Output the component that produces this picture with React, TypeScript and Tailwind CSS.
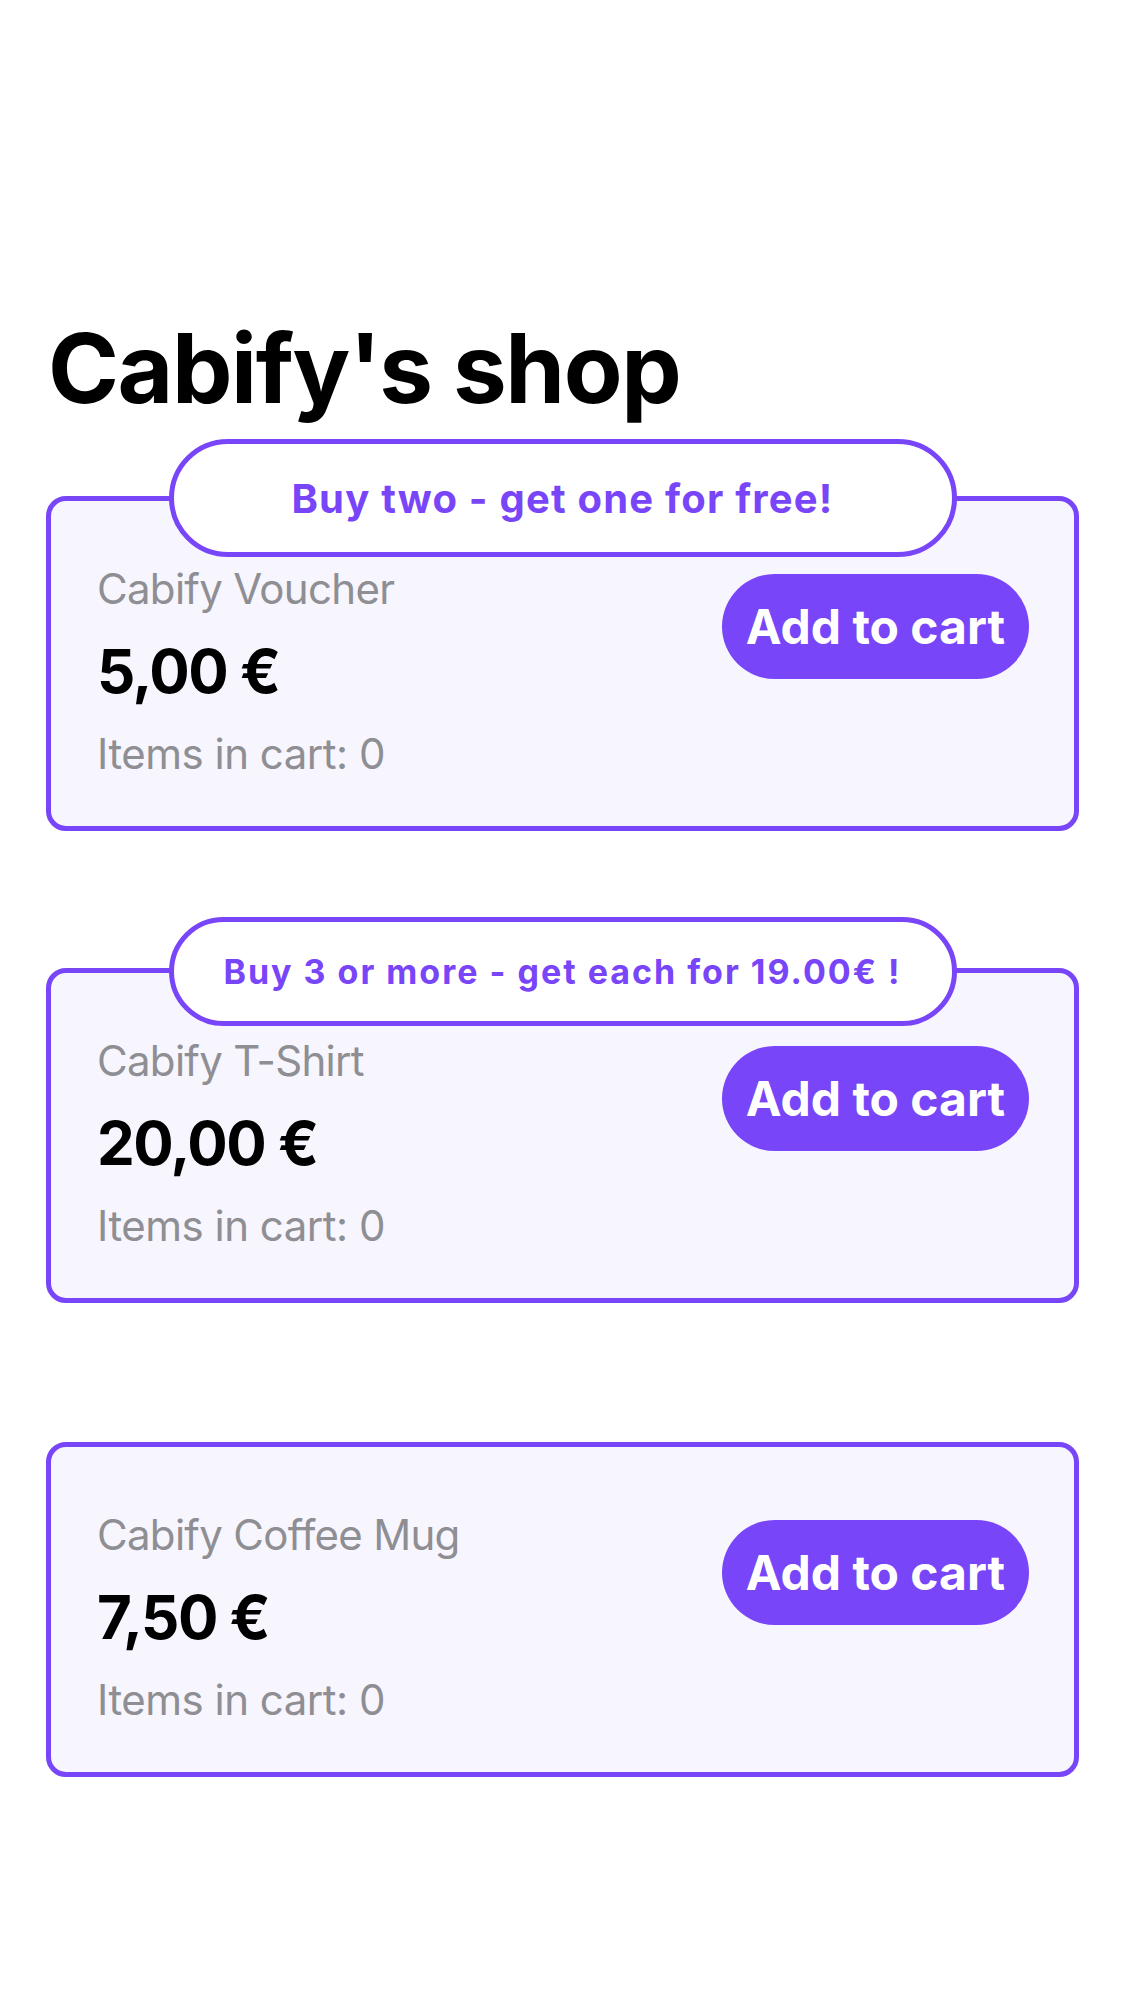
import React from "react";

type Product = {
  name: string;
  price: string;
  badge?: { text: string; size: "lg" | "sm" };
};

const products: Product[] = [
  { name: "Cabify Voucher", price: "5,00 €", badge: { text: "Buy two - get one for free!", size: "lg" } },
  { name: "Cabify T-Shirt", price: "20,00 €", badge: { text: "Buy 3 or more - get each for 19.00€ !", size: "sm" } },
  { name: "Cabify Coffee Mug", price: "7,50 €" },
];

function Badge({ text, size }: { text: string; size: "lg" | "sm" }) {
  if (size === "lg") {
    return (
      <div className="absolute left-1/2 top-[-62px] flex h-[118px] w-[788px] -translate-x-1/2 items-center justify-center rounded-full border-[5px] border-[#7845f8] bg-white text-[40px] font-bold leading-[47px] tracking-[1.2px] text-[#7845f8]">
        {text}
      </div>
    );
  }
  return (
    <div className="absolute left-1/2 top-[-56px] flex h-[109px] w-[788px] -translate-x-1/2 items-center justify-center rounded-full border-[5px] border-[#7845f8] bg-white text-[34px] font-bold leading-[40px] tracking-[2px] text-[#7845f8]">
      {text}
    </div>
  );
}

function Card({ p, className }: { p: Product; className?: string }) {
  return (
    <div
      className={
        "relative flex items-start justify-between rounded-[20px] border-[5px] border-[#7845f8] bg-[#f7f5fe] pb-[47px] pl-[46px] pr-[45px] pt-[62px] " +
        (className ?? "")
      }
    >
      {p.badge && <Badge text={p.badge.text} size={p.badge.size} />}
      <div className="flex flex-col">
        <div className="text-[42px] leading-[51px] tracking-[-0.7px] text-[#8e8e93]">{p.name}</div>
        <div className="mt-[21px] text-[60px] font-bold leading-[73px] tracking-[-1.5px] text-black">{p.price}</div>
        <div className="mt-[20px] text-[42px] leading-[51px] tracking-[-0.5px] text-[#8e8e93]">Items in cart: 0</div>
      </div>
      <button className="mt-[11px] flex h-[105px] items-center rounded-full bg-[#7845f8] px-[24px] text-[48px] font-bold leading-none text-white">
        Add to cart
      </button>
    </div>
  );
}

export default function App() {
  return (
    <div className="min-h-[2001px] w-full bg-white px-[46px] pt-[310px] font-['Inter','Noto_Sans',sans-serif]">
      <h1 className="pl-[2px] text-[96px] font-bold leading-[116px] tracking-[-1.4px] text-black">Cabify's shop</h1>
      <div className="mt-[70px] flex flex-col">
        <Card p={products[0]} />
        <Card p={products[1]} className="mt-[137px]" />
        <Card p={products[2]} className="mt-[139px]" />
      </div>
    </div>
  );
}
